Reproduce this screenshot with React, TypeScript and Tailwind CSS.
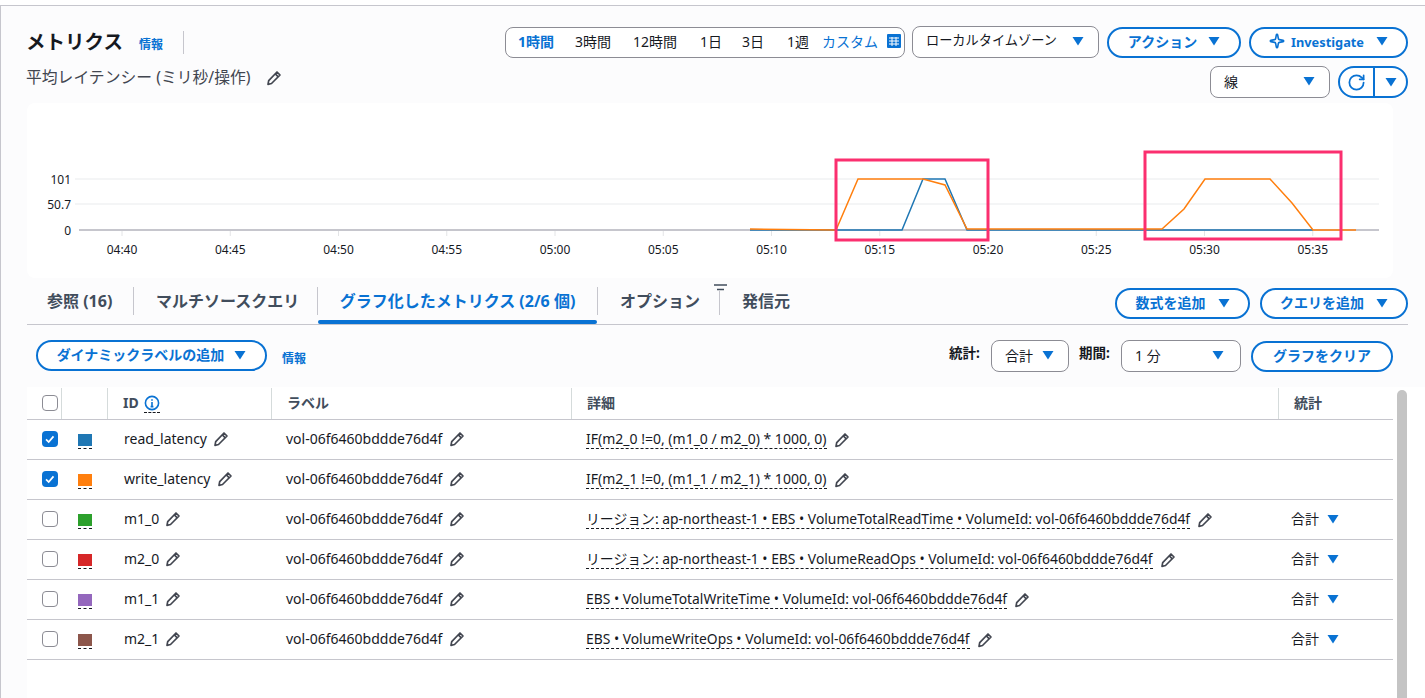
import React from 'react';
import { RotateCw, Sparkle } from 'lucide-react';

const ticks = ['04:40', '04:45', '04:50', '04:55', '05:00', '05:05', '05:10', '05:15', '05:20', '05:25', '05:30', '05:35'];

const rows = [
  { id: 'read_latency', color: 'bg-[#1f77b4]', checked: true, detail: 'IF(m2_0 !=0, (m1_0 / m2_0) * 1000, 0)', stat: false },
  { id: 'write_latency', color: 'bg-[#ff7f0e]', checked: true, detail: 'IF(m2_1 !=0, (m1_1 / m2_1) * 1000, 0)', stat: false },
  { id: 'm1_0', color: 'bg-[#2ca02c]', checked: false, detail: 'リージョン: ap-northeast-1 • EBS • VolumeTotalReadTime • VolumeId: vol-06f6460bddde76d4f', stat: true },
  { id: 'm2_0', color: 'bg-[#d62728]', checked: false, detail: 'リージョン: ap-northeast-1 • EBS • VolumeReadOps • VolumeId: vol-06f6460bddde76d4f', stat: true },
  { id: 'm1_1', color: 'bg-[#9467bd]', checked: false, detail: 'EBS • VolumeTotalWriteTime • VolumeId: vol-06f6460bddde76d4f', stat: true },
  { id: 'm2_1', color: 'bg-[#8c564b]', checked: false, detail: 'EBS • VolumeWriteOps • VolumeId: vol-06f6460bddde76d4f', stat: true },
];

function Caret({ className = '' }: { className?: string }) {
  return (
    <svg viewBox="0 0 12 10" className={`w-[12px] h-[10px] shrink-0 ${className}`}>
      <path d="M0.5 1h11L6 9.5z" fill="#0972d3" />
    </svg>
  );
}

function Pencil({ className = '' }: { className?: string }) {
  return (
    <svg viewBox="0 0 16 16" fill="none" stroke="#424650" strokeWidth="1.7" strokeLinejoin="round" className={`w-[16px] h-[16px] shrink-0 ${className}`}>
      <path d="M11 2 14 5 5.5 13.5 2 14.3l.7-3.7z" />
      <path d="M9.3 3.8l3 3" />
    </svg>
  );
}

function PillButton({ children, className = '' }: { children: React.ReactNode; className?: string }) {
  return (
    <button className={`h-[31px] pb-[2px] flex items-center justify-center rounded-full border-2 border-[#0972d3] bg-white text-[14px] font-bold text-[#0972d3] ${className}`}>
      {children}
    </button>
  );
}

function SelectBox({ children, className = '' }: { children: React.ReactNode; className?: string }) {
  return (
    <div className={`h-[32px] pb-[2px] flex items-center justify-between rounded-lg border border-[#8c8c94] bg-white text-[14px] text-[#16191f] ${className}`}>
      {children}
    </div>
  );
}

function Checkbox({ checked }: { checked: boolean }) {
  if (checked) {
    return (
      <div className="w-[16px] h-[16px] rounded-[4px] bg-[#0972d3] flex items-center justify-center">
        <svg viewBox="0 0 16 16" fill="none" stroke="white" strokeWidth="2" className="w-[14px] h-[14px]">
          <path d="M3.5 8.5 6.5 11.5 12 5" />
        </svg>
      </div>
    );
  }
  return <div className="w-[16px] h-[16px] rounded-[4px] border border-[#8c8c94] bg-white" />;
}

function Chart() {
  const orange = '750,229 836,230 858,179 923,179 945,185 967,229 1162,229 1184,209 1205,179 1270,179 1292,203 1313,230 1356,230';
  const blue = '750,230 902,230 923,179 945,179 967,230 1313,230';
  return (
    <div className="w-[1366px] h-[175px] mt-[5px] bg-white rounded-lg overflow-hidden">
      <svg viewBox="27 103 1366 175" className="w-[1366px] h-[175px] block">
        <line x1="75" x2="1379" y1="179" y2="179" stroke="#f1f2f3" strokeWidth="1.5" />
        <line x1="75" x2="1379" y1="204" y2="204" stroke="#f1f2f3" strokeWidth="1.5" />
        <line x1="79" x2="1379" y1="230" y2="230" stroke="#c6c6cd" strokeWidth="2" />
        {[['101', 179], ['50.7', 204], ['0', 230]].map(([label, y]) => (
          <text key={label} x="71" y={Number(y) + 5} textAnchor="end" fontSize="12" fill="#16191f" fontFamily="Noto Sans">
            {label}
          </text>
        ))}
        {ticks.map((t, i) => {
          const x = 122 + i * 108.25;
          return (
            <g key={t}>
              <line x1={x} x2={x} y1="231" y2="236" stroke="#e3e4e6" />
              <text x={x} y="254" textAnchor="middle" fontSize="12" fill="#16191f" fontFamily="Noto Sans">
                {t}
              </text>
            </g>
          );
        })}
        <polyline points={blue} fill="none" stroke="#1f77b4" strokeWidth="1.5" />
        <polyline points={orange} fill="none" stroke="#ff7f0e" strokeWidth="1.5" />
        <rect x="836" y="160" width="152" height="80" fill="none" stroke="#fb2f6f" strokeWidth="3" />
        <rect x="1145" y="152" width="196" height="87" fill="none" stroke="#fb2f6f" strokeWidth="3" />
      </svg>
    </div>
  );
}

export default function App() {
  return (
    <div className="w-[1425px] h-[698px] overflow-hidden bg-white pt-[5px] font-['Noto_Sans','Noto_Sans_CJK_JP',sans-serif] text-[#16191f]">
      <div className="h-[693px] border-t border-l border-[#c6c6cd] bg-[#fcfcfd] pl-[26px] pt-[20px]">
        {/* Header */}
        <div className="w-[1381px] flex justify-between">
          <div>
            <div className="flex items-center h-[32px]">
              <h1 className="text-[19.5px] font-bold w-[112px] leading-[30px] -ml-px mr-px">メトリクス</h1>
              <a className="text-[12px] font-bold text-[#0972d3] mt-[6px] w-[44px]">情報</a>
              <div className="w-px h-[23px] bg-[#c6c6cd]" />
            </div>
            <div className="flex items-center mt-[8px] h-[24px] text-[15.8px] text-[#424650]">
              <span className="-ml-px">平均レイテンシー (ミリ秒/操作)</span>
              <Pencil className="ml-[15px]" />
            </div>
          </div>
          <div className="flex flex-col items-end">
            <div className="flex items-center gap-[8px]">
              <div className="w-[400px] h-[31px] pb-[2px] -mr-px flex items-center rounded-lg border border-[#8c8c94] bg-white text-[14px] pl-[12px]">
                <span className="w-[57px] font-bold text-[#0972d3]">1時間</span>
                <span className="w-[58px]">3時間</span>
                <span className="w-[67px]">12時間</span>
                <span className="w-[42px]">1日</span>
                <span className="w-[45px]">3日</span>
                <span className="w-[35px]">1週</span>
                <span className="w-[65px] text-[#0972d3]">カスタム</span>
                <svg viewBox="0 0 14 14" className="w-[14px] h-[14px]">
                  <rect width="14" height="14" rx="1" fill="#0972d3" />
                  <path d="M2 4h10M2 7h10M2 10h10M5 3v9M9 3v9" stroke="white" strokeWidth="1" />
                </svg>
              </div>
              <SelectBox className="w-[187px] pl-[13px] pr-[14px]">
                <span className="text-[13.2px]">ローカルタイムゾーン</span>
                <Caret />
              </SelectBox>
              <PillButton className="w-[134px] gap-[11px]">
                <span>アクション</span>
                <Caret />
              </PillButton>
              <PillButton className="w-[159px]">
                <Sparkle size={16} strokeWidth={2.4} className="mr-[6px]" />
                <span className="text-[12.8px] mt-[4px]">Investigate</span>
                <Caret className="ml-[12px]" />
              </PillButton>
            </div>
            <div className="flex items-center gap-[8px] mt-[8px]">
              <SelectBox className="w-[120px] pl-[13px] pr-[14px]">
                <span>線</span>
                <Caret />
              </SelectBox>
              <div className="w-[70px] h-[32px] flex rounded-full border-2 border-[#0972d3] bg-white">
                <div className="w-[35px] flex items-center justify-center border-r-2 border-[#0972d3]">
                  <RotateCw size={19} strokeWidth={2.2} color="#0972d3" />
                </div>
                <div className="flex-1 flex items-center justify-center">
                  <Caret />
                </div>
              </div>
            </div>
          </div>
        </div>

        <Chart />

        {/* Tabs */}
        <div className="w-[1381px] h-[42px] mt-[5px] flex items-center justify-between border-b border-[#c6c6cd]">
          <div className="h-full flex items-center text-[16px] font-bold text-[#414d5c]">
            <span className="px-[20px] w-[107px] h-[28px] -mt-[5px] flex items-center border-r border-[#c6c6cd] whitespace-nowrap">参照 (16)</span>
            <span className="px-[22px] w-[184px] h-[28px] -mt-[5px] flex items-center border-r border-[#c6c6cd] whitespace-nowrap">マルチソースクエリ</span>
            <div className="relative w-[279px] h-full pb-[5px] flex items-center justify-center text-[#0972d3] whitespace-nowrap">
              グラフ化したメトリクス (2/6 個)
              <div className="absolute left-0 right-0 bottom-0 h-[4px] rounded-full bg-[#0972d3]" />
            </div>
            <span className="px-[22px] w-[123px] h-[28px] -mt-[5px] flex items-center border-l border-r border-[#c6c6cd] whitespace-nowrap relative">
              オプション
              <svg viewBox="0 0 13 7" className="absolute right-[-8px] top-[-3px] w-[13px] h-[7px] bg-[#fcfcfd]">
                <path d="M0 1h13M3 5.5h7" stroke="#414d5c" strokeWidth="1.4" />
              </svg>
            </span>
            <span className="pl-[22px] -mt-[5px] whitespace-nowrap">発信元</span>
          </div>
          <div className="flex items-center gap-[10px]">
            <PillButton className="w-[135px] gap-[12px]">
              <span>数式を追加</span>
              <Caret />
            </PillButton>
            <PillButton className="w-[148px] gap-[12px]">
              <span>クエリを追加</span>
              <Caret />
            </PillButton>
          </div>
        </div>

        {/* Actions */}
        <div className="w-[1366px] h-[62px] pt-[15px] pl-[9px] flex items-start justify-between">
          <div className="flex items-center">
            <PillButton className="w-[231px] gap-[10px]">
              <span>ダイナミックラベルの追加</span>
              <Caret />
            </PillButton>
            <a className="ml-[15px] mt-[6px] text-[12px] font-bold text-[#0972d3]">情報</a>
          </div>
          <div className="flex items-center">
            <span className="text-[13.5px] font-bold w-[42px] mb-[5px]">統計:</span>
            <SelectBox className="w-[78px] pl-[13px] pr-[14px]">
              <span>合計</span>
              <Caret />
            </SelectBox>
            <span className="text-[13.5px] font-bold w-[42px] ml-[10px] mb-[5px]">期間:</span>
            <SelectBox className="w-[120px] pl-[13px] pr-[16px]">
              <span>1 分</span>
              <Caret />
            </SelectBox>
            <PillButton className="w-[142px] ml-[10px]">グラフをクリア</PillButton>
          </div>
        </div>

        {/* Table */}
        <div className="w-[1398px] h-[400px] bg-white flex items-start">
          <div className="w-[1366px] text-[14px]">
            <div className="h-[33px] grid grid-cols-[35px_46px_164px_300px_707px_114px] items-center border-b border-[#c6c6cd] font-bold text-[#414d5c]">
              <div className="pl-[15px] h-[31px] flex items-center border-r border-[#d5dbdb]">
                <Checkbox checked={false} />
              </div>
              <div className="h-[31px] border-r border-[#d5dbdb]" />
              <div className="pl-[15px] h-[31px] pb-[2px] flex items-center gap-[5px] border-r border-[#d5dbdb]">
                <span>ID</span>
                <svg viewBox="0 0 16 16" fill="none" stroke="#0972d3" strokeWidth="1.6" className="w-[16px] h-[16px] mt-[4px] border-b border-dashed border-[#16191f] box-content pb-[1px]">
                  <circle cx="8" cy="8" r="6.6" />
                  <path d="M8 7v4.5M8 4.2v1.6M6.6 11.6h2.8" />
                </svg>
              </div>
              <div className="pl-[15px] h-[31px] pb-[2px] flex items-center border-r border-[#d5dbdb]">ラベル</div>
              <div className="pl-[15px] h-[31px] pb-[2px] flex items-center border-r border-[#d5dbdb]">詳細</div>
              <div className="pl-[15px] h-[31px] pb-[2px] flex items-center">統計</div>
            </div>
            {rows.map((row) => (
              <div key={row.id} className="h-[40px] pb-[2px] grid grid-cols-[35px_46px_164px_300px_707px_114px] items-center border-b border-[#c6c6cd]">
                <div className="pl-[15px]">
                  <Checkbox checked={row.checked} />
                </div>
                <div className="pl-[16px]">
                  <div className={`w-[14px] h-[12px] mt-[5px] ${row.color}`} />
                  <div className="w-[14px] mt-[2px] border-b border-dashed border-[#16191f]" />
                </div>
                <div className="pl-[16px] flex items-center gap-[6px]">
                  <span className="whitespace-nowrap">{row.id}</span>
                  <Pencil />
                </div>
                <div className="pl-[14px] flex items-center gap-[7px]">
                  <span className="whitespace-nowrap">vol-06f6460bddde76d4f</span>
                  <Pencil />
                </div>
                <div className="pl-[14px] flex items-center gap-[7px]">
                  <span className={`whitespace-nowrap border-b border-dashed border-[#16191f] leading-[19px] ${row.stat ? 'text-[13.85px]' : 'text-[14px]'}`}>{row.detail}</span>
                  <Pencil className="mt-[2px]" />
                </div>
                <div className="pl-[12px] flex items-center gap-[8px]">
                  {row.stat && (
                    <>
                      <span>合計</span>
                      <Caret />
                    </>
                  )}
                </div>
              </div>
            ))}
          </div>
          <div className="w-[10px] h-[400px] ml-[4px] mt-[3px] rounded-t-full bg-[#c4c4c4]" />
        </div>
      </div>
    </div>
  );
}
